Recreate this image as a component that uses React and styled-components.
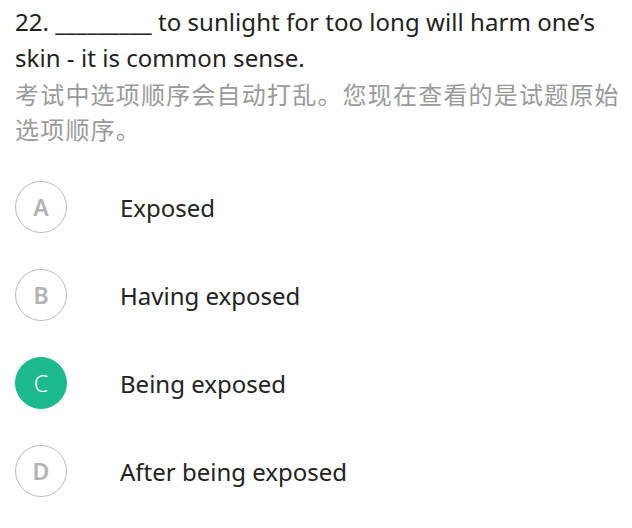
import React from 'react';
import styled, { createGlobalStyle } from 'styled-components';

const GlobalStyle = createGlobalStyle`
  body {
    margin: 0;
    background: #ffffff;
    font-family: "Noto Sans", "Noto Sans CJK SC", sans-serif;
  }
`;

const Page = styled.div`
  padding: 4px 8px 0 15px;
`;

const Question = styled.div`
  font-size: 24px;
  line-height: 36px;
  letter-spacing: 0.05px;
  color: #222222;
`;

const Note = styled.div`
  font-size: 24px;
  line-height: 35px;
  letter-spacing: 1.2px;
  color: #9a9a9a;
  margin-top: 1px;
`;

const Options = styled.div`
  display: flex;
  flex-direction: column;
  gap: 36px;
  margin-top: 34px;
`;

const Row = styled.div`
  display: flex;
  align-items: center;
  height: 52px;
`;

const Badge = styled.div`
  width: 52px;
  height: 52px;
  box-sizing: border-box;
  border-radius: 50%;
  border: 1.5px solid ${p => (p.$active ? '#1bb98b' : '#bdbdbd')};
  background: ${p => (p.$active ? '#1bb98b' : '#ffffff')};
  color: ${p => (p.$active ? '#ffffff' : '#b3b3b3')};
  display: flex;
  align-items: center;
  justify-content: center;
  font-size: 23px;
  font-weight: ${p => (p.$active ? 300 : 600)};
  flex-shrink: 0;
`;

const Label = styled.div`
  margin-left: 53px;
  font-size: 24px;
  color: #222222;
`;

const options = [
  { key: 'A', text: 'Exposed' },
  { key: 'B', text: 'Having exposed' },
  { key: 'C', text: 'Being exposed', active: true },
  { key: 'D', text: 'After being exposed' },
];

const App = () => (
  <>
    <GlobalStyle />
    <Page>
      <Question>22. _________ to sunlight for too long will harm one’s skin - it is common sense.</Question>
      <Note>考试中选项顺序会自动打乱。您现在查看的是试题原始选项顺序。</Note>
      <Options>
        {options.map(o => (
          <Row key={o.key}>
            <Badge $active={o.active}>{o.key}</Badge>
            <Label>{o.text}</Label>
          </Row>
        ))}
      </Options>
    </Page>
  </>
);

export default App;
